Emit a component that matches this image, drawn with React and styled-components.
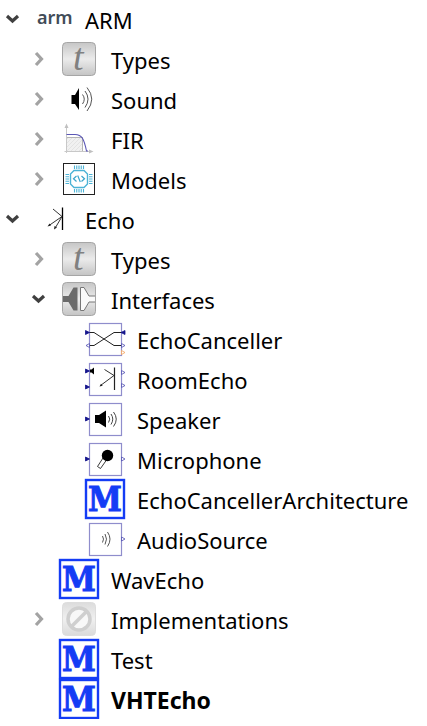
import React, { useState } from "react";
import styled, { createGlobalStyle } from "styled-components";

const GlobalStyle = createGlobalStyle`
  body {
    margin: 0;
    background: #fff;
    color: #000;
    font-family: "Noto Sans", "Open Sans", sans-serif;
  }
`;

const Page = styled.main`
  overflow: hidden;
`;

const Branch = styled.ul`
  list-style: none;
  margin: ${(p) => (p.$root ? "-1px 0 0" : "0")};
  padding: 0 0 0 ${(p) => (p.$root ? "0" : "26px")};
`;

const Row = styled.div`
  display: flex;
  align-items: center;
  height: 40px;
`;

const Toggle = styled.button`
  flex: none;
  display: flex;
  width: 26px;
  height: 40px;
  padding: 0;
  border: 0;
  background: none;
  cursor: pointer;
  color: ${(p) => (p.$open ? "#404040" : "#a3a3a3")};
`;

const Spacer = styled.span`
  flex: none;
  width: 26px;
`;

const Icon = styled.svg`
  flex: none;
  width: 40px;
  height: 40px;
  margin: 0 12px 0 7px;
  overflow: visible;
`;

const Label = styled.span`
  padding-top: 2px;
  font-size: ${(p) => (p.$bold ? "23px" : "22px")};
  line-height: 38px;
  white-space: nowrap;
  font-weight: ${(p) => (p.$bold ? 700 : 400)};
`;

const LogoText = styled.text`
  font-family: "Noto Sans", sans-serif;
  font-size: 18px;
  font-weight: 600;
  fill: #414c58;
`;

const ScriptLetter = styled.text`
  font-family: "Liberation Serif", serif;
  font-size: 38px;
  font-style: italic;
  fill: #808080;
`;

const BlockLetter = styled.text`
  font-family: "DejaVu Serif Condensed", "DejaVu Serif", serif;
  font-size: 34px;
  font-weight: 700;
  fill: #143cf5;
  stroke: #143cf5;
  stroke-width: 1;
`;

const NAVY = "#14148c";
const PERI = "#a5a3d8";

const Plate = ({ id, faded }) => (
  <>
    <defs>
      <linearGradient id={id} x1="0" y1="0" x2="0" y2="1">
        <stop offset="0" stopColor={faded ? "#dcdcdc" : "#c6c6c6"} />
        <stop offset="0.5" stopColor={faded ? "#f0f0f0" : "#ebebeb"} />
        <stop offset="1" stopColor={faded ? "#dadada" : "#c4c4c4"} />
      </linearGradient>
    </defs>
    <rect x="3.5" y="3.5" width="33" height="33" rx="4" fill={`url(#${id})`} stroke={faded ? "#dddddd" : "#a6a6a6"} />
  </>
);

const Frame = () => <rect x="4.5" y="4.5" width="32" height="32" fill="#fff" stroke="#8f8dcc" strokeWidth="1.2" />;
const PortIn = ({ y }) => <path d={`M0.5 ${y - 2}L4.5 ${y}L0.5 ${y + 2}Z`} fill={NAVY} stroke={NAVY} strokeWidth="0.8" />;
const PortOut = ({ y, color = "#4d4bb0" }) => (
  <path d={`M36.5 ${y - 2}L40 ${y}L36.5 ${y + 2}Z`} fill="#fff" stroke={color} strokeWidth="0.8" />
);

const glyphs = {
  arm: <LogoText x="4" y="25">arm</LogoText>,
  types: (
    <>
      <Plate id="plate-types" />
      <ScriptLetter x="14" y="31">t</ScriptLetter>
    </>
  ),
  sound: (
    <>
      <path d="M12.5 16H16L20 9V31L16 25H12.5Z" fill="#000" />
      <path d="M23.5 15.5Q27 20 23.5 25M26 12Q32 20 26 28.5M28 8.5Q37.5 20 28 32" fill="none" stroke="#555" />
    </>
  ),
  fir: (
    <>
      <defs>
        <pattern id="hatch" width="4" height="4" patternUnits="userSpaceOnUse">
          <path d="M0 4L4 0" stroke="#dcdcdc" strokeWidth="0.7" />
        </pattern>
      </defs>
      <rect x="7.5" y="18.5" width="16" height="14" fill="#f1f1f1" />
      <rect x="7.5" y="18.5" width="16" height="14" fill="url(#hatch)" stroke="#b4b4b4" />
      <path d="M7.5 34V7M5.5 32.5H31" stroke="#c8c8c8" />
      <path d="M7.5 4.5L9.5 9H5.5ZM34.5 32.5L30 30.5V34.5Z" fill="#c0c0c0" />
      <path d="M7.5 15.5H16C23 15.5 25 20 27.5 32H29" fill="none" stroke="#5a56b5" strokeWidth="1.1" />
    </>
  ),
  models: (
    <>
      <rect x="4.5" y="4.5" width="31" height="31" fill="#fff" stroke="#222" />
      <path d="M15 11.5H25L28.5 15V25L25 28.5H15L11.5 25V15Z" fill="none" stroke="#4cb3d6" strokeWidth="1.4" />
      <path
        d="M15.5 6.5V10M17.75 6.5V10M20 6.5V10M22.25 6.5V10M24.5 6.5V10M15.5 30V33.5M17.75 30V33.5M20 30V33.5M22.25 30V33.5M24.5 30V33.5M6.5 15.5H10M6.5 17.75H10M6.5 20H10M6.5 22.25H10M6.5 24.5H10M30 15.5H33.5M30 17.75H33.5M30 20H33.5M30 22.25H33.5M30 24.5H33.5"
        stroke="#4cb3d6"
        strokeWidth="1.1"
      />
      <path d="M17.5 17L14.5 19.7L17.5 22.5M22.5 17L25.5 19.7L22.5 22.5M18.7 16.5L21.3 23" fill="none" stroke="#3aa5cc" strokeWidth="1.2" />
    </>
  ),
  echo: (
    <>
      <path d="M29.5 8.5V31" stroke="#000" strokeWidth="1.3" />
      <path d="M20 10L29 17.5L16 26.5M29 17.5L22.5 28.5" fill="none" stroke="#333" />
      <path d="M14.5 27.5L16.5 24.5L18 26.5ZM21 30.5L21.5 27L24 28.5Z" fill="#222" />
    </>
  ),
  interfaces: (
    <>
      <Plate id="plate-interfaces" />
      <path d="M4 17H9.5L14.5 8.5H18.5V31.5H14.5L9.5 23H4Z" fill="#6a6a6a" />
      <path d="M36 17H30L25 8.5H21.5V31.5H25L30 23H36" fill="#fafafa" stroke="#777" />
    </>
  ),
  canceller: (
    <>
      <Frame />
      <path d="M4.5 13.5H9L29 26.5H36.5M36.5 13.5H29L9 26.5H4.5" fill="none" stroke="#222" />
      <PortIn y={13.5} />
      <path d="M40 11.5L36 13.5L40 15.5Z" fill={NAVY} stroke={NAVY} strokeWidth="0.8" />
      <path d="M4.5 24.5L1 26.5L4.5 28.5Z" fill="#fff" stroke="#4d4bb0" strokeWidth="0.8" />
      <PortOut y={26.5} />
      <PortOut y={33.5} color="#f5a35c" />
    </>
  ),
  room: (
    <>
      <Frame />
      <PortIn y={12} />
      <PortIn y={28} />
      <path d="M5 10.5H6.5L9 8.5V15.5L6.5 13.5H5Z" fill="#000" />
      <path d="M29.5 8.5V31" stroke="#222" strokeWidth="1.2" />
      <path d="M19.5 10.5L29 16.5L15.5 26.5" fill="none" stroke="#333" />
      <path d="M14.5 27.5L16 24.7L17.7 26.7Z" fill="#222" />
      <PortOut y={13.5} />
      <PortOut y={26.5} />
    </>
  ),
  speaker: (
    <>
      <Frame />
      <PortIn y={20} />
      <path d="M10 16H14L21 11.5V28.5L14 24H10Z" fill="#000" />
      <path d="M23.5 17Q26 20 23.5 23.5M26 15Q29.5 20 26 25.5M28.5 13Q34 20 28.5 27.5" fill="none" stroke="#444" />
    </>
  ),
  microphone: (
    <>
      <Frame />
      <PortIn y={20} />
      <path d="M18 19L12.5 27.5L15.5 29.5L21.5 21" fill="#fff" stroke="#222" strokeWidth="0.9" />
      <circle cx="22.5" cy="16.5" r="5.7" fill="#000" />
      <PortOut y={20} />
    </>
  ),
  model: (
    <>
      <rect x="1" y="1" width="38" height="38" fill="#fff" stroke="#143cf5" strokeWidth="2.4" />
      <BlockLetter x="20" y="32" textAnchor="middle">M</BlockLetter>
    </>
  ),
  source: (
    <>
      <Frame />
      <path d="M17.5 17Q19.5 20 17.5 23.5M20 15Q23 20 20 25.5M22.5 13Q27.5 20 22.5 27.5" fill="none" stroke="#555" />
      <PortOut y={20} />
    </>
  ),
  blocked: (
    <>
      <Plate id="plate-blocked" faded />
      <circle cx="20" cy="20" r="11" fill="#f8f8f8" stroke="#cfcfcf" strokeWidth="3.5" />
      <path d="M12.5 27.5L27.5 12.5" stroke="#cfcfcf" strokeWidth="3.5" />
    </>
  ),
};

const tree = [
  {
    name: "ARM",
    icon: "arm",
    open: true,
    children: [
      { name: "Types", icon: "types", children: [] },
      { name: "Sound", icon: "sound", children: [] },
      { name: "FIR", icon: "fir", children: [] },
      { name: "Models", icon: "models", children: [] },
    ],
  },
  {
    name: "Echo",
    icon: "echo",
    open: true,
    children: [
      { name: "Types", icon: "types", children: [] },
      {
        name: "Interfaces",
        icon: "interfaces",
        open: true,
        children: [
          { name: "EchoCanceller", icon: "canceller" },
          { name: "RoomEcho", icon: "room" },
          { name: "Speaker", icon: "speaker" },
          { name: "Microphone", icon: "microphone" },
          { name: "EchoCancellerArchitecture", icon: "model" },
          { name: "AudioSource", icon: "source" },
        ],
      },
      { name: "WavEcho", icon: "model" },
      { name: "Implementations", icon: "blocked", children: [] },
      { name: "Test", icon: "model" },
      { name: "VHTEcho", icon: "model", bold: true },
    ],
  },
];

function Node({ node }) {
  const [open, setOpen] = useState(Boolean(node.open));
  return (
    <li>
      <Row>
        {node.children ? (
          <Toggle type="button" $open={open} aria-expanded={open} aria-label={`Toggle ${node.name}`} onClick={() => setOpen(!open)}>
            <svg width="26" height="40" viewBox="0 0 26 40" fill="none" stroke="currentColor" strokeWidth="3.2">
              <path d={open ? "M7 17L12.5 22L18 17" : "M10 14L15.5 20L10 26"} />
            </svg>
          </Toggle>
        ) : (
          <Spacer />
        )}
        <Icon viewBox="0 0 40 40" aria-hidden="true">
          {glyphs[node.icon]}
        </Icon>
        <Label $bold={node.bold}>{node.name}</Label>
      </Row>
      {open && node.children && node.children.length > 0 && (
        <Branch>
          {node.children.map((child) => (
            <Node key={child.name} node={child} />
          ))}
        </Branch>
      )}
    </li>
  );
}

export default function App() {
  return (
    <Page>
      <GlobalStyle />
      <Branch $root aria-label="Libraries">
        {tree.map((node) => (
          <Node key={node.name} node={node} />
        ))}
      </Branch>
    </Page>
  );
}
